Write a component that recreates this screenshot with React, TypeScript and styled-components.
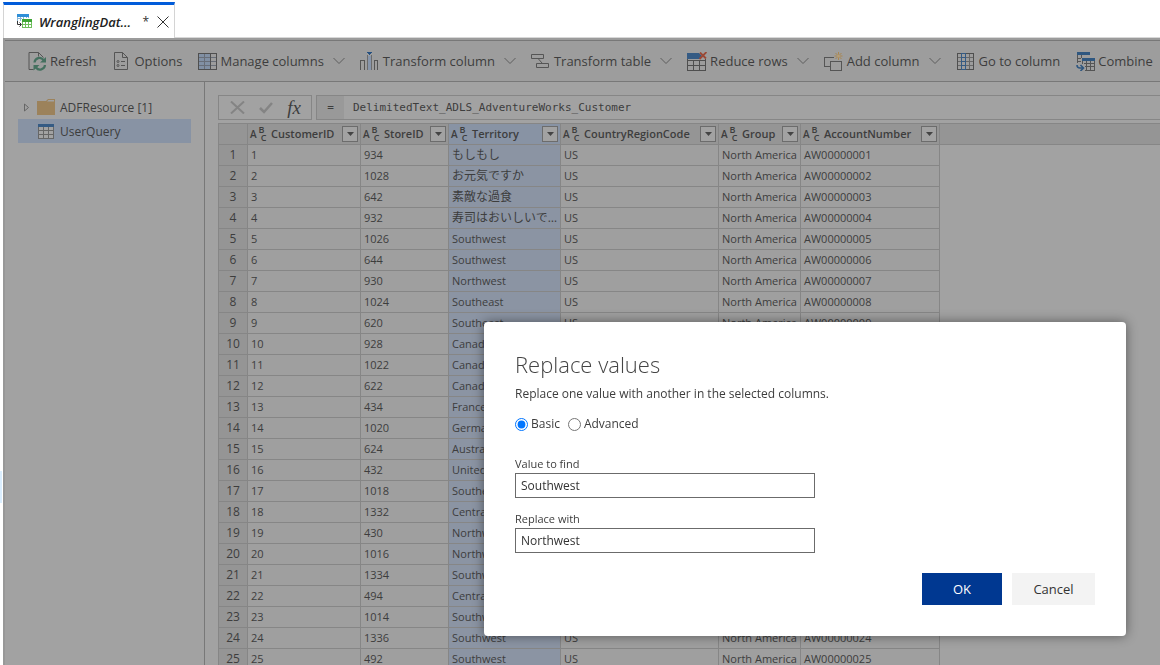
import React, { useState } from "react";
import styled, { createGlobalStyle, css } from "styled-components";

const ink = "#3d3d3d";
const line = "#868686";
const sans = `"Open Sans", "Noto Sans", "Noto Sans CJK JP", sans-serif`;

const GlobalStyle = createGlobalStyle`
  * { box-sizing: border-box; }
  body { margin: 0; background: #fff; overflow: hidden; font-family: ${sans}; color: ${ink}; }
  button, input { font-family: inherit; }
`;

const Page = styled.div`
  display: flex;
  flex-direction: column;
  height: 100vh;
  padding: 2px 0 0 3px;
  overflow: hidden;
`;

const TabStrip = styled.header`
  display: flex;
  flex: none;
  height: 36px;
`;

const Tab = styled.div`
  display: flex;
  align-items: center;
  width: 172px;
  padding: 0 5px 0 13px;
  border-top: 3px solid #015cda;
  border-left: 1px solid #d4d4d4;
  border-right: 1px solid #d4d4d4;
`;

const TabTitle = styled.span`
  margin-left: 7px;
  font-size: 13px;
  font-style: italic;
  font-weight: 600;
  color: #222;
  white-space: nowrap;
`;

const Dirty = styled.span`
  margin-left: auto;
  margin-right: 8px;
  font-size: 12px;
  color: #333;
`;

const TabRest = styled.div`
  flex: 1;
  border-bottom: 1px solid #d8d8d8;
`;

const IconButton = styled.button`
  display: flex;
  padding: 0;
  border: 0;
  background: none;
  color: inherit;
`;

const Frame = styled.div`
  display: flex;
  flex-direction: column;
  flex: 1;
  min-height: 0;
  padding-top: 2px;
  border-left: 2px solid #989898;
  background: #9b9b9b;
`;

const Toolbar = styled.div`
  display: flex;
  flex: none;
  align-items: center;
  height: 42px;
  padding-left: 22px;
  gap: 15px;
  border-top: 1px solid #787878;
  border-bottom: 1px solid #787878;
  background: #9d9d9d;
  overflow: hidden;
`;

const Tool = styled.button`
  display: flex;
  flex: none;
  align-items: center;
  gap: 3px;
  padding: 0;
  border: 0;
  background: none;
  font-size: 13px;
  line-height: 20px;
  color: ${ink};
  white-space: nowrap;
`;

const ToolIcon = styled.span`
  display: flex;
  justify-content: center;
  width: 20px;
`;

const MenuArrow = styled.span`
  display: flex;
  padding-left: 6px;
`;

const Body = styled.div`
  display: flex;
  flex: 1;
  min-height: 0;
  background: #a2a2a2;
`;

const Sidebar = styled.nav`
  flex: none;
  width: 200px;
  padding: 13px 13px 0;
  border-right: 1px solid #787878;
`;

const TreeRow = styled.button<{ $selected?: boolean }>`
  display: flex;
  align-items: center;
  width: 100%;
  height: 24px;
  padding: 0 0 0 6px;
  gap: 5px;
  border: 0;
  background: ${(p) => (p.$selected ? "#8893a4" : "none")};
  font-size: 12px;
  color: ${ink};
`;

const Twisty = styled.span`
  display: flex;
  width: 8px;
`;

const TreeIcon = styled.span`
  display: flex;
  justify-content: center;
  width: 18px;
`;

const Work = styled.main`
  display: flex;
  flex-direction: column;
  flex: 1;
  min-width: 0;
  padding: 13px 0 0 13px;
`;

const FormulaRow = styled.div`
  display: flex;
  flex: none;
  height: 25px;
  gap: 4px;
  margin-bottom: 3px;
`;

const FormulaActions = styled.div`
  display: flex;
  align-items: center;
  justify-content: space-between;
  width: 94px;
  padding: 0 10px 0 11px;
  border: 1px solid ${line};
`;

const Fx = styled.span`
  font: italic 19px "Liberation Serif", serif;
`;

const Formula = styled.label`
  display: flex;
  flex: 1;
  align-items: stretch;
  border: 1px solid ${line};
  border-right: 0;
  font: 11px/23px "DejaVu Sans Mono", monospace;
`;

const Equals = styled.span`
  width: 27px;
  background: #999;
  text-align: center;
`;

const FormulaInput = styled.input`
  flex: 1;
  padding: 0 9px;
  border: 0;
  outline: 0;
  background: none;
  && { font: inherit; }
  color: ${ink};
`;

const GridArea = styled.div`
  flex: 1;
  min-height: 0;
  overflow: hidden;
  background: linear-gradient(#959595 20px, ${line} 20px, ${line} 21px, transparent 21px);
  border-top: 1px solid ${line};
`;

const Grid = styled.table`
  width: 722px;
  table-layout: fixed;
  border-collapse: separate;
  border-spacing: 0;
  border-left: 1px solid ${line};
  font-size: 11px;
`;

const cell = css`
  height: 21px;
  padding: 0 3px;
  border-right: 1px solid ${line};
  border-bottom: 1px solid ${line};
  line-height: 20px;
  overflow: hidden;
  white-space: nowrap;
  text-overflow: ellipsis;
`;

const HeadCell = styled.th<{ $selected?: boolean }>`
  ${cell}
  padding: 0 2px;
  background: ${(p) => (p.$selected ? "#8893a4" : "#959595")};
  font-weight: 600;
`;

const HeadContent = styled.div`
  display: flex;
  align-items: center;
  gap: 4px;
  height: 20px;
`;

const TypeMark = styled.span`
  display: flex;
  flex: none;
  align-items: center;
  width: 17px;
  font-size: 10px;
  font-weight: 600;
  line-height: 8px;
`;

const MarkStack = styled.span`
  display: flex;
  flex-direction: column;
  font-size: 9px;
`;

const MarkLower = styled.span`
  padding-left: 4px;
`;

const FilterButton = styled.button`
  display: flex;
  flex: none;
  align-items: center;
  justify-content: center;
  width: 16px;
  height: 16px;
  margin-left: auto;
  padding: 0;
  border: 1px solid #6c6c6c;
  background: #a2a2a2;
`;

const RowHead = styled.th`
  ${cell}
  background: #959595;
  font-size: 12px;
  font-weight: 400;
  text-align: center;
`;

const Cell = styled.td<{ $selected?: boolean }>`
  ${cell}
  background: ${(p) => (p.$selected ? "#8b94a3" : "#9f9f9f")};

  &:lang(ja) { font-size: 12px; }
`;

const SideMark = styled.div`
  position: fixed;
  left: 0;
  top: 471px;
  width: 2px;
  height: 32px;
  background: #daeeff;
`;

const Dialog = styled.form`
  position: fixed;
  top: 322px;
  right: 34px;
  width: 642px;
  padding: 26px 31px 31px;
  border-radius: 4px;
  background: #fff;
  box-shadow: 0 0 12px rgba(0, 0, 0, 0.45);
`;

const Title = styled.h1`
  margin: 0;
  font-size: 22px;
  font-weight: 300;
  line-height: 32px;
  color: #444;
`;

const Lead = styled.p`
  margin: 4px 0 10px;
  font-size: 12px;
  line-height: 20px;
`;

const Choices = styled.div`
  display: flex;
  gap: 8px;
  margin-bottom: 22px;
  font-size: 12px;
  line-height: 20px;
`;

const Choice = styled.label`
  display: flex;
  align-items: center;
  gap: 3px;

  input { width: 13px; height: 13px; margin: 0; }
`;

const Field = styled.label`
  display: block;
  width: 300px;
  font-size: 11px;
  line-height: 16px;

  & + & { margin-top: 13px; }
`;

const TextBox = styled.input`
  display: block;
  width: 100%;
  height: 25px;
  margin-top: 1px;
  padding: 0 5px;
  border: 1px solid #6b6b6b;
  background: #fff;
  font-size: 12px;
  color: #333;
`;

const Actions = styled.div`
  display: flex;
  justify-content: flex-end;
  gap: 10px;
  margin-top: 20px;
`;

const Action = styled.button<{ $primary?: boolean }>`
  width: ${(p) => (p.$primary ? 80 : 83)}px;
  height: 32px;
  padding: 0;
  border: 0;
  background: ${(p) => (p.$primary ? "#003891" : "#f3f3f3")};
  color: ${(p) => (p.$primary ? "#fff" : "#333")};
  font-size: 13px;
`;

const Chevron = () => (
  <svg width="12" height="8" viewBox="0 0 12 8" fill="none" stroke="#5c5c5c">
    <path d="M.5 1 6 6.500 11.500 1" />
  </svg>
);

const TabIcon = () => (
  <svg width="15" height="15" viewBox="0 0 15 15" shapeRendering="crispEdges">
    <path d="M.5 3v4M3.500 3v4M6.500 3v2M9.500 3v1M0 4.500h5M11.500 3v1" stroke="#8ab8d8" />
    <path d="M0 0h12v3H0z" fill="#2f8fd8" />
    <path d="M5 8v6h9V8" fill="#fff" />
    <path d="M5 5h10v3H5z" fill="#3fa535" />
    <path d="M5.500 8v6M8.500 8v6M11.500 8v6M14.500 8v6M5 10.500h9M5 13.500h10" stroke="#6fbf5c" />
    <path d="M.5 7v3.500H4M2.500 8.500l2 2-2 2" stroke="#333" fill="none" shapeRendering="auto" />
  </svg>
);

const RefreshIcon = () => (
  <svg width="19" height="19" viewBox="0 0 19 19" fill="none">
    <path d="M5.500 17.500H1V.5h9.500l5 5M10.500.5v4" stroke="#555" />
    <path d="M6.500 10.500a5 5 0 0 1 9-2.500M17 13a5 5 0 0 1-9 2.500" stroke="#44705f" strokeWidth="2.200" />
    <path d="M18 5v5.500h-6zM5.500 18.500V13h6z" fill="#44705f" />
  </svg>
);

const OptionsIcon = () => (
  <svg width="14" height="18" viewBox="0 0 14 18" fill="none" stroke="#555">
    <path d="M.5.5h8l5 5v12H.500zM8.500.5v5h5M7 9.500h4M7 13.500h4" />
    <circle cx="4" cy="9.500" r="1" />
    <circle cx="4" cy="13.500" r="1" />
  </svg>
);

const ColumnsIcon = () => (
  <svg width="19" height="17" viewBox="0 0 19 17" fill="none" shapeRendering="crispEdges">
    <path d="M1 1h11v15H1z" fill="#8190a4" />
    <path d="M1 4.500h17M1 8.500h17M1 12.500h17M6.500 1v15" stroke="#686e78" />
    <path d="M.5.5h18v16H.500zM12.500 1v15" stroke="#4f4f4f" />
  </svg>
);

const TransformColumnIcon = () => (
  <svg width="19" height="18" viewBox="0 0 19 18" fill="none" shapeRendering="crispEdges">
    <path d="M.5 18V8.500h4V18M14.500 18V8.500h3V18" stroke="#555" />
    <path d="M7.500 3v15M11.500 3v15" stroke="#6b6b6b" />
    <path d="M8 4h3v14H8z" fill="#8795aa" />
    <path d="M7 0h5v1H7zM8 1h3v1H8zM9 2h1v1H9z" fill="#255080" />
  </svg>
);

const TransformTableIcon = () => (
  <svg width="19" height="14" viewBox="0 0 19 14" fill="none" stroke="#555">
    <path d="M.5.500h12v4H.500zM5.500 9.500h12v4h-12zM7.500 5l3.500 4" />
  </svg>
);

const ReduceRowsIcon = () => (
  <svg width="20" height="19" viewBox="0 0 20 19" fill="none">
    <path d="M.5 7v11.500h18V7M0 8.500h19M0 13.500h19M6.500 8v10M12.500 8v10" stroke="#4f4f4f" shapeRendering="crispEdges" />
    <path d="M0 1h12l3 3-2 3H0z" fill="#355b84" />
    <path d="m13 .5 6 6M19.500 0l-7 7" stroke="#9b4834" strokeWidth="1.800" />
  </svg>
);

const AddColumnIcon = () => (
  <svg width="19" height="19" viewBox="0 0 19 19" fill="none">
    <path d="M6 14.500H.5v-9H10M6.500 9.500h11v9h-11z" stroke="#555" shapeRendering="crispEdges" />
    <path d="M14.500 0v8M10.500 4h8M11.500 1l6 6M17.500 1l-6 6" stroke="#a98650" />
    <circle cx="14.500" cy="4" r="1.500" fill="#b39d79" />
  </svg>
);

const GoToIcon = () => (
  <svg width="17" height="17" viewBox="0 0 17 17" fill="none" shapeRendering="crispEdges">
    <path d="M1 4.500h15M1 8.500h15M1 12.500h15M12.500 1v15" stroke="#686868" />
    <path d="M.5.500h16v16H.500z" stroke="#4f4f4f" />
    <path d="M4.500.500h4v16h-4zM5 4.500h3M5 8.500h3M5 12.500h3" stroke="#355b84" />
  </svg>
);

const CombineIcon = () => (
  <svg width="19" height="19" viewBox="0 0 19 19" fill="none" shapeRendering="crispEdges">
    <path d="M1.500 3v8M1 6.500h4M1 9.500h4M5.500 3v3" stroke="#555" />
    <path d="M1 0h13v3H1zM6 6h13v3H6z" fill="#2f5780" />
    <path d="M6.500 9v3M18.500 9v9H9M10.500 9v9M14.500 9v9M8 11.500h10M9 14.500h9" stroke="#555" />
    <path d="M1 13c0 2 1 3 3 3h3M4.500 13l3 3-3 3" stroke="#2f5780" strokeWidth="1.600" shapeRendering="auto" />
  </svg>
);

const FolderIcon = () => (
  <svg width="18" height="16" viewBox="0 0 18 16">
    <path d="M0 2h9l2-2h7v16H0z" fill="#9c825b" />
    <path d="M10 2.500 11.500 1H17v1.500z" fill="#a2a2a2" />
  </svg>
);

const TableIcon = () => (
  <svg width="16" height="15" viewBox="0 0 16 15" fill="none" shapeRendering="crispEdges">
    <path d="M0 0h16v15H0z" fill="#a2a2a2" />
    <path d="M.5 2.500h15v12H.500zM1 6.500h14M1 10.500h14M5.500 3v11M10.500 3v11" stroke="#666" />
    <path d="M0 0h16v3H0z" fill="#355b84" />
  </svg>
);

const tools = [
  { label: "Refresh", icon: <RefreshIcon /> },
  { label: "Options", icon: <OptionsIcon /> },
  { label: "Manage columns", icon: <ColumnsIcon />, menu: true },
  { label: "Transform column", icon: <TransformColumnIcon />, menu: true },
  { label: "Transform table", icon: <TransformTableIcon />, menu: true },
  { label: "Reduce rows", icon: <ReduceRowsIcon />, menu: true },
  { label: "Add column", icon: <AddColumnIcon />, menu: true },
  { label: "Go to column", icon: <GoToIcon /> },
  { label: "Combine", icon: <CombineIcon />, menu: true },
];

const columns = [
  { name: "CustomerID", width: 113 },
  { name: "StoreID", width: 88 },
  { name: "Territory", width: 112, selected: true },
  { name: "CountryRegionCode", width: 158 },
  { name: "Group", width: 82 },
  { name: "AccountNumber", width: 139 },
];

const stores = [
  934, 1028, 642, 932, 1026, 644, 930, 1024, 620, 928, 1022, 622, 434, 1020, 624, 432, 1018, 1332, 430, 1016,
  1334, 494, 1014, 1336, 492,
];

const territories = [
  "もしもし", "お元気ですか", "素敵な過食", "寿司はおいしいで...", "Southwest", "Southwest", "Northwest",
  "Southeast", "Southeast", "Canada", "Canada", "Canada", "France", "Germany", "Australia", "United Kingdom",
  "Southeast", "Central", "Northwest", "Northwest", "Southwest", "Central", "Southwest", "Southwest", "Southwest",
];

const rows = stores.map((store, i) => [
  String(i + 1),
  String(store),
  territories[i],
  "US",
  "North America",
  `AW${String(i + 1).padStart(8, "0")}`,
]);

const isJapanese = (text: string) => /[\u3040-\u30ff\u4e00-\u9fff]/.test(text);

export default function App() {
  const [formula, setFormula] = useState("DelimitedText_ADLS_AdventureWorks_Customer");
  const [mode, setMode] = useState("Basic");
  const [find, setFind] = useState("Southwest");
  const [replacement, setReplacement] = useState("Northwest");

  return (
    <>
      <GlobalStyle />
      <Page>
        <TabStrip>
          <Tab>
            <TabIcon />
            <TabTitle>WranglingDat...</TabTitle>
            <Dirty>*</Dirty>
            <IconButton aria-label="Close tab">
              <svg width="12" height="12" viewBox="0 0 12 12" stroke="#333">
                <path d="m.5.500 11 11M11.500.500l-11 11" />
              </svg>
            </IconButton>
          </Tab>
          <TabRest />
        </TabStrip>
        <Frame>
          <Toolbar>
            {tools.map((t) => (
              <Tool key={t.label}>
                <ToolIcon>{t.icon}</ToolIcon>
                <span>{t.label}</span>
                {t.menu && (
                  <MenuArrow>
                    <Chevron />
                  </MenuArrow>
                )}
              </Tool>
            ))}
          </Toolbar>
          <Body>
            <Sidebar>
              <TreeRow>
                <Twisty>
                  <svg width="6" height="9" viewBox="0 0 6 9" fill="none" stroke="#666">
                    <path d="M.5 1v7l4-3.500z" />
                  </svg>
                </Twisty>
                <TreeIcon>
                  <FolderIcon />
                </TreeIcon>
                <span>ADFResource [1]</span>
              </TreeRow>
              <TreeRow $selected>
                <Twisty />
                <TreeIcon>
                  <TableIcon />
                </TreeIcon>
                <span>UserQuery</span>
              </TreeRow>
            </Sidebar>
            <Work>
              <FormulaRow>
                <FormulaActions>
                  <IconButton aria-label="Discard formula">
                    <svg width="15" height="13" viewBox="0 0 15 13" stroke="#848484" strokeWidth="2">
                      <path d="m1 .5 13 12M14 .5l-13 12" />
                    </svg>
                  </IconButton>
                  <IconButton aria-label="Apply formula">
                    <svg width="14" height="12" viewBox="0 0 14 12" fill="none" stroke="#848484" strokeWidth="2.500">
                      <path d="m1 6 4 4 8-9" />
                    </svg>
                  </IconButton>
                  <Fx>fx</Fx>
                </FormulaActions>
                <Formula>
                  <Equals>=</Equals>
                  <FormulaInput value={formula} onChange={(e) => setFormula(e.target.value)} />
                </Formula>
              </FormulaRow>
              <GridArea>
                <Grid>
                  <colgroup>
                    <col style={{ width: 29 }} />
                    {columns.map((c) => (
                      <col key={c.name} style={{ width: c.width }} />
                    ))}
                  </colgroup>
                  <thead>
                    <tr>
                      <HeadCell aria-label="Row" />
                      {columns.map((c) => (
                        <HeadCell key={c.name} $selected={c.selected} scope="col">
                          <HeadContent>
                            <TypeMark aria-hidden>
                              A
                              <MarkStack>
                                <span>B</span>
                                <MarkLower>C</MarkLower>
                              </MarkStack>
                            </TypeMark>
                            <span>{c.name}</span>
                            <FilterButton aria-label={`Filter ${c.name}`}>
                              <svg width="7" height="4" viewBox="0 0 7 4">
                                <path d="M0 0h7L3.500 4z" fill="#444" />
                              </svg>
                            </FilterButton>
                          </HeadContent>
                        </HeadCell>
                      ))}
                    </tr>
                  </thead>
                  <tbody>
                    {rows.map((row) => (
                      <tr key={row[0]}>
                        <RowHead scope="row">{row[0]}</RowHead>
                        {row.map((value, i) => (
                          <Cell
                            key={columns[i].name}
                            $selected={columns[i].selected}
                            lang={isJapanese(value) ? "ja" : undefined}
                          >
                            {value}
                          </Cell>
                        ))}
                      </tr>
                    ))}
                  </tbody>
                </Grid>
              </GridArea>
            </Work>
          </Body>
        </Frame>
      </Page>
      <SideMark />
      <Dialog role="dialog" aria-labelledby="dialog-title" onSubmit={(e) => e.preventDefault()}>
        <Title id="dialog-title">Replace values</Title>
        <Lead>Replace one value with another in the selected columns.</Lead>
        <Choices>
          {["Basic", "Advanced"].map((m) => (
            <Choice key={m}>
              <input type="radio" name="mode" checked={mode === m} onChange={() => setMode(m)} />
              {m}
            </Choice>
          ))}
        </Choices>
        <Field>
          Value to find
          <TextBox value={find} onChange={(e) => setFind(e.target.value)} />
        </Field>
        <Field>
          Replace with
          <TextBox value={replacement} onChange={(e) => setReplacement(e.target.value)} />
        </Field>
        <Actions>
          <Action $primary type="submit">OK</Action>
          <Action type="button">Cancel</Action>
        </Actions>
      </Dialog>
    </>
  );
}
